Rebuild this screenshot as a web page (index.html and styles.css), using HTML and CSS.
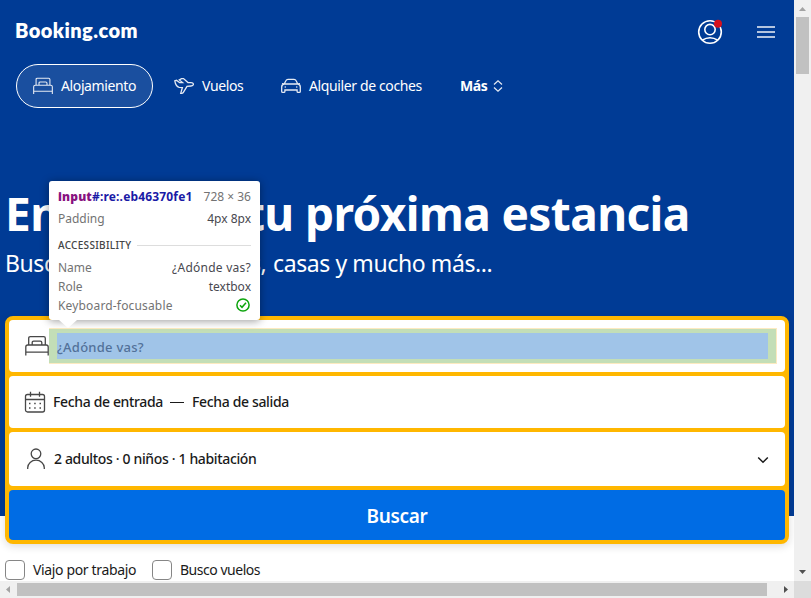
FILE: index.html
```html
<!DOCTYPE html>
<html lang="es">
<head>
<meta charset="utf-8">
<title>Booking.com</title>
<link rel="stylesheet" href="styles.css">
</head>
<body>
<svg class="defs" width="0" height="0">
  <symbol id="bed" viewBox="0 0 24 24"><path d="M3.700 11V4.200q0-1.600 1.600-1.600h13.400q1.600 0 1.600 1.600V11M7.200 11V8.600q0-1.500 1.500-1.500h6.600q1.500 0 1.500 1.500V11M.8 21.500V13q0-2 2-2h18.400q2 0 2 2v8.500M.8 18.200h22.400"/></symbol>
</svg>
<div class="window">
  <div class="page">
    <header class="hero">
      <div class="topbar">
        <div class="logo">Booking.com</div>
        <div class="actions">
          <svg class="account" width="26" height="26" viewBox="0 0 26 26"><circle cx="13" cy="13" r="11.3"/><circle cx="13" cy="10.6" r="5.2"/><path d="M5.2 21.2q7.8-5 15.6 0"/><circle class="dot" cx="21" cy="4.8" r="4"/></svg>
          <svg class="burger" width="18" height="14" viewBox="0 0 18 14"><path d="M0 2h18M0 7h18M0 12h18"/></svg>
        </div>
      </div>
      <nav class="tabs">
        <a class="tab active"><svg class="icon" width="20" height="20"><use href="#bed"/></svg><span>Alojamiento</span></a>
        <a class="tab flights"><svg class="icon" width="20" height="20" viewBox="0 0 20 20"><path d="M.8 4.800l1.600-.5 3.200 2.300h3L5.300 3.900l2.200-1.300h2l4.500 4h3c1.500 0 2.400.7 2.400 1.600 0 1.100-1 1.700-2.400 1.800l-4 .4-3.800 6.300c-.5.800-1.300.9-2.500.7l1.700-5.900-3.200-.2C2.700 10.600 1.300 7.800.8 4.800z"/></svg><span>Vuelos</span></a>
        <a class="tab cars"><svg class="icon" width="20" height="20" viewBox="0 0 20 20"><path d="M3.200 8L5 4.500Q5.500 3.300 7 3.300h6q1.500 0 2 1.200L16.800 8M1 7.600l2.200.4h13.600l2.200-.4M3.200 8Q.7 8.400.7 11v4.400q0 1 1 1h1.200q1 0 1-1V14h12.200v1.400q0 1 1 1h1.200q1 0 1-1V11q0-2.600-2.500-3"/><path d="M3.700 11h1.100M15.200 11h1.100"/></svg><span>Alquiler de coches</span></a>
        <a class="tab more"><span>Más</span><svg class="icon" width="10" height="12" viewBox="0 0 10 12"><path d="M1 4.500l4-3.700 4 3.700M1 7.500l4 3.700 4-3.700"/></svg></a>
      </nav>
      <h1><span>Encuentra</span> <span>tu próxima estancia</span></h1>
      <p class="lead"><span>Busca ofertas en hoteles,</span> <span>casas y mucho más...</span></p>
    </header>
    <main>
      <form class="search">
        <div class="field destination">
          <svg class="icon" width="24" height="24"><use href="#bed"/></svg>
          <div class="input"><div class="input-content">¿Adónde vas?</div></div>
          <aside class="tooltip">
            <div class="line head"><span class="selector"><b>input</b>#:re:.eb46370fe1</span><span class="size">728 × 36</span></div>
            <div class="line"><span>Padding</span><span class="value">4px 8px</span></div>
            <div class="section">ACCESSIBILITY</div>
            <div class="line"><span>Name</span><span class="value question">¿Adónde vas?</span></div>
            <div class="line"><span>Role</span><span class="value">textbox</span></div>
            <div class="line"><span class="keyboard">Keyboard-focusable</span><svg class="check" width="16" height="16" viewBox="0 0 16 16"><circle cx="8" cy="8" r="6.1"/><path d="M5 8.300l2 2 4-4.600"/></svg></div>
          </aside>
        </div>
        <div class="field dates">
          <svg class="icon" width="22" height="22" viewBox="0 0 22 22"><rect x="1.500" y="3.500" width="19" height="17.500" rx="2"/><path d="M1.500 8.500h19M6.500.8v5M15.500.8v5"/><path class="dots" d="M5 12.500h1.500M10.200 12.500h1.500M15.500 12.500H17M5 17h1.500M10.200 17h1.500M15.500 17H17"/></svg>
          <span class="from">Fecha de entrada</span><i class="dash"></i><span class="to">Fecha de salida</span>
        </div>
        <div class="field guests">
          <svg class="icon" width="20" height="22" viewBox="0 0 20 22"><circle cx="10" cy="5.800" r="4.800"/><path d="M1.700 21v-1.200a8.300 7.600 0 0 1 16.600 0V21"/></svg>
          <span class="people">2 adultos · 0 niños · 1 habitación</span>
          <svg class="chevron" width="12" height="8" viewBox="0 0 12 8"><path d="M1.200 1.500L6 6.200l4.800-4.700"/></svg>
        </div>
        <div class="submit"><span>Buscar</span></div>
      </form>
      <div class="options">
        <label><i class="box"></i><span class="work">Viajo por trabajo</span></label>
        <label><i class="box"></i><span class="look">Busco vuelos</span></label>
      </div>
    </main>
  </div>
  <div class="vbar"><svg width="17" height="16" viewBox="0 0 17 16"><path fill="#a3a3a3" d="M5 11l3.500-4 3.500 4z"/></svg><div class="thumb"></div><svg class="end" width="17" height="17" viewBox="0 0 17 17"><path fill="#505050" d="M5 6h7l-3.500 4z"/></svg></div>
  <div class="hbar"><svg width="17" height="17" viewBox="0 0 17 17"><path fill="#a3a3a3" d="M10 5v7L6 8.500z"/></svg><div class="thumb"></div><svg class="end" width="17" height="17" viewBox="0 0 17 17"><path fill="#505050" d="M7 5v7l4-3.500z"/></svg></div>
  <div class="corner"></div>
</div>
</body>
</html>
```
FILE: styles.css
```css
* { box-sizing: border-box; }
body { margin: 0; font-family: "Noto Sans", "Open Sans", sans-serif; font-size: 14px; color: #1a1a1a; overflow: hidden; }
span { white-space: nowrap; }
svg { display: block; flex: none; fill: none; }
.defs { position: absolute; }
.window { display: grid; grid-template-columns: 794px 17px; grid-template-rows: 581px 17px; width: 811px; height: 598px; }
.page { overflow: hidden; background: #fff; }

.hero { height: 516px; background: #003b95; color: #fff; }
.topbar { display: flex; justify-content: space-between; height: 64px; padding: 0 19px 0 15px; align-items: center; }
.logo { font: 800 20px/26px Lato, sans-serif; letter-spacing: 0.45px; margin-top: -4px; }
.actions { display: flex; align-items: center; gap: 34px; }
.account { stroke: #fff; stroke-width: 1.6; }
.account .dot { fill: #d4111e; stroke: none; }
.burger { stroke: #b3c4df; stroke-width: 2; }
.tabs { display: flex; height: 44px; padding-left: 16px; line-height: 20px; letter-spacing: -.38px; }
.tab { display: flex; align-items: center; gap: 8px; height: 44px; }
.tab .icon { stroke: #e6ebf4; stroke-width: 1.3; }
.tab.active { width: 137px; padding-left: 16px; border: 1px solid #fff; border-radius: 22px; background: #1a4f9f; }
.flights { margin-left: 21px; width: 70px; }
.cars { margin-left: 37px; width: 142px; }
.more { margin-left: 37px; gap: 6px; font-weight: 700; }
.more .icon { stroke-width: 1.2; }
h1 { margin: 74px 0 0 5px; font-size: 46px; line-height: 62px; font-weight: 700; letter-spacing: -.6px; display: flex; }
h1 span:first-child { width: 240px; }
.lead { margin: 1px 0 0 5px; font-size: 23px; line-height: 36px; letter-spacing: -.4px; display: flex; }
.lead span:first-child { width: 268px; }

.search { position: relative; width: 784px; margin: -200px 0 0 5px; display: grid; grid-template-rows: 52px 52px 54px 50px; gap: 4px; border: 4px solid #ffb700; border-radius: 8px; background: #ffb700; box-shadow: 0 2px 8px rgba(26,26,26,.16); }
.field { display: flex; align-items: center; background: #fff; border-radius: 4px; font-weight: 500; letter-spacing: -.35px; }
.field .icon { stroke: #474747; stroke-width: 1.3; }
.destination { position: relative; padding-left: 16px; letter-spacing: normal; }
.input { display: flex; width: 728px; height: 36px; padding: 4px 8px; border: 1px solid #fceac0; border-left: 0; background: #c3deb7; }
.input-content { width: 711px; height: 26px; background: #a0c4e8; color: #527199; line-height: 28px; font-size: 13px; letter-spacing: .25px; }
.dates { padding-left: 15px; }
.dates .dots { stroke-width: 1.5; }
.from, .to, .people, .work, .look { margin-bottom: 2px; }
.from { width: 109px; margin-left: 7px; }
.dash { width: 14px; height: 1px; margin: 1px 8px 0; background: #1a1a1a; }
.guests { padding-left: 17px; }
.people { margin-left: 8px; }
.chevron { margin: 2px 16px 0 auto; stroke: #1a1a1a; stroke-width: 1.5; }
.submit { display: flex; align-items: center; justify-content: center; border-radius: 4px; background: #006ce4; color: #fff; font-size: 19px; font-weight: 600; letter-spacing: -.3px; padding-top: 2px; }
.options { display: flex; gap: 16px; padding: 16px 0 0 5px; letter-spacing: -.35px; }
.options label { display: flex; align-items: center; gap: 8px; height: 20px; }
.work { width: 103px; }
.look { letter-spacing: -.48px; }
.box { width: 20px; height: 20px; border: 1px solid #868686; border-radius: 4px; }

.tooltip { position: absolute; left: 40px; top: -139px; width: 211px; height: 139px; padding: 6px 9px 0; background: #fff; border-radius: 3px; box-shadow: 0 1px 8px rgba(0,0,0,.4); font-size: 12px; font-weight: 400; color: #737373; z-index: 1; }
.tooltip::after { content: ""; position: absolute; left: 10px; top: 139px; border: 9px solid transparent; border-width: 8px 9px 0; border-top-color: #fff; }
.line { display: flex; justify-content: space-between; height: 19px; line-height: 19px; }
.head { height: 22px; }
.selector { font-weight: 700; color: #1a1aa6; letter-spacing: .16px; }
.selector b { color: #881280; }
.value { color: #48484f; }
.question { letter-spacing: .25px; }
.keyboard { letter-spacing: .16px; }
.section { display: flex; align-items: center; gap: 6px; height: 30px; padding-top: 4px; font-size: 10px; letter-spacing: .3px; color: #444; font-weight: 500; }
.section::after { content: ""; flex: 1; height: 1px; background: #ddd; }
.check { stroke: #0ca40c; stroke-width: 1.5; margin-top: 1px; }

.vbar, .hbar { display: flex; background: #f0f0f0; }
.vbar { flex-direction: column; }
.vbar .thumb { width: 13px; height: 57px; margin: 1px 0 0 2px; background: #c1c1c1; }
.vbar .end { margin-top: auto; }
.hbar .thumb { width: 750px; height: 13px; margin-top: 2px; background: #c1c1c1; }
.hbar .end { margin-left: auto; }
.corner { background: #dcdcdc; }
```
